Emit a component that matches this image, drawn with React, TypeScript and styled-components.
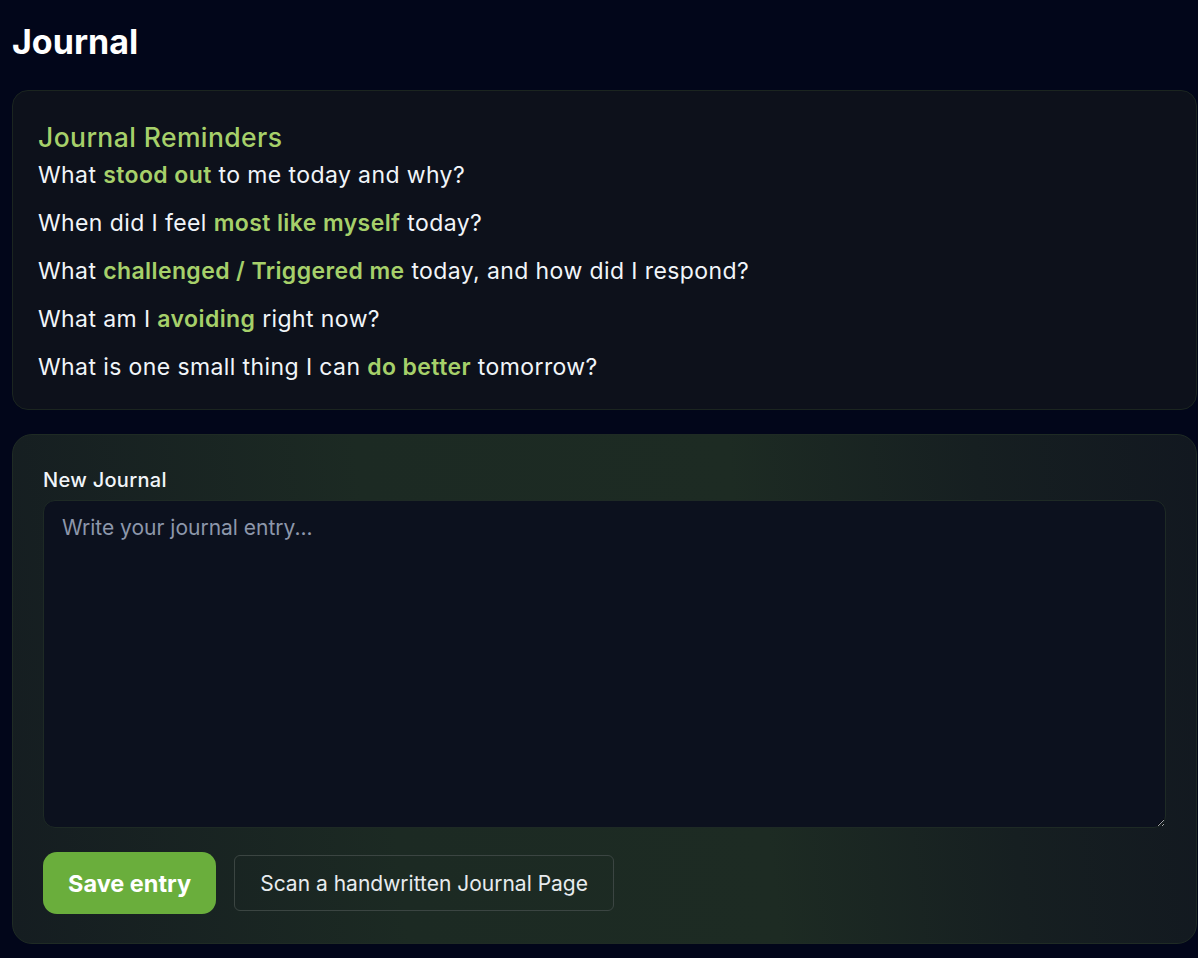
import styled, { createGlobalStyle } from "styled-components";

const GlobalStyle = createGlobalStyle`
  html, body {
    margin: 0;
    padding: 0;
    background-color: #02061a;
    color: #f1f5f9;
    font-family: Inter, "Noto Sans", "Liberation Sans", sans-serif;
    color-scheme: dark;
  }
  * {
    box-sizing: border-box;
  }
`;

const Page = styled.main`
  min-height: 958px;
  padding: 22px 1px 14px 12px;
`;

const Title = styled.h1`
  margin: 0 0 28px;
  font-size: 34px;
  line-height: 40px;
  font-weight: 700;
  color: #ffffff;
`;

const ReminderCard = styled.section`
  background-color: #0d111b;
  border: 1px solid #1b2520;
  border-radius: 16px;
  padding: 30px 25px 24px;
  margin-bottom: 24px;
`;

const ReminderTitle = styled.h2`
  margin: 0 0 4px;
  font-size: 26.5px;
  line-height: 32px;
  font-weight: 500;
  letter-spacing: 0.4px;
  color: #a6d06a;
`;

const Prompt = styled.p`
  margin: 0 0 12px;
  font-size: 23px;
  line-height: 36px;
  letter-spacing: 0.4px;
  color: #f1f5f9;
  &:last-child {
    margin-bottom: 0;
  }
`;

const Accent = styled.strong`
  font-weight: 600;
  color: #a6d06a;
`;

const EntryCard = styled.section`
  border: 1px solid #1f2b24;
  border-radius: 20px;
  padding: 31px 30px 29px;
  background: linear-gradient(
    84deg,
    #151d21 0%,
    #1c2a23 32%,
    #1d2b23 62%,
    #161f21 82%,
    #121820 100%
  );
`;

const Label = styled.label`
  display: block;
  margin: 0 0 6px;
  font-size: 20px;
  line-height: 28px;
  font-weight: 500;
  letter-spacing: 0.3px;
  color: #f1f5f9;
`;

const EntryInput = styled.textarea`
  display: block;
  width: 100%;
  height: 328px;
  margin: 0 0 24px;
  padding: 12px 18px;
  background-color: #0c111e;
  border: 1px solid #1e2a25;
  border-radius: 12px;
  color: #f1f5f9;
  font-family: inherit;
  font-size: 21px;
  line-height: 30px;
  outline: none;
  &::placeholder {
    color: #8d97ab;
  }
`;

const Actions = styled.div`
  display: flex;
  align-items: center;
  gap: 18px;
`;

const PrimaryButton = styled.button`
  height: 62px;
  padding: 0 25px;
  border: none;
  border-radius: 14px;
  background-color: #6aae3c;
  color: #ffffff;
  font-family: inherit;
  font-size: 23.5px;
  font-weight: 700;
  cursor: pointer;
`;

const GhostButton = styled.button`
  height: 56px;
  padding: 0 25px;
  border: 1px solid #3b4542;
  border-radius: 6px;
  background: transparent;
  color: #e8ecef;
  font-family: inherit;
  font-size: 21px;
  font-weight: 400;
  cursor: pointer;
`;

const prompts: { before: string; accent: string; after: string }[] = [
  { before: "What ", accent: "stood out", after: " to me today and why?" },
  { before: "When did I feel ", accent: "most like myself", after: " today?" },
  {
    before: "What ",
    accent: "challenged / Triggered me",
    after: " today, and how did I respond?",
  },
  { before: "What am I ", accent: "avoiding", after: " right now?" },
  {
    before: "What is one small thing I can ",
    accent: "do better",
    after: " tomorrow?",
  },
];

export default function App() {
  return (
    <>
      <GlobalStyle />
      <Page>
        <Title>Journal</Title>
        <ReminderCard>
          <ReminderTitle>Journal Reminders</ReminderTitle>
          {prompts.map((p) => (
            <Prompt key={p.accent}>
              {p.before}
              <Accent>{p.accent}</Accent>
              {p.after}
            </Prompt>
          ))}
        </ReminderCard>
        <EntryCard>
          <Label htmlFor="entry">New Journal</Label>
          <EntryInput id="entry" placeholder="Write your journal entry..." />
          <Actions>
            <PrimaryButton>Save entry</PrimaryButton>
            <GhostButton>Scan a handwritten Journal Page</GhostButton>
          </Actions>
        </EntryCard>
      </Page>
    </>
  );
}
